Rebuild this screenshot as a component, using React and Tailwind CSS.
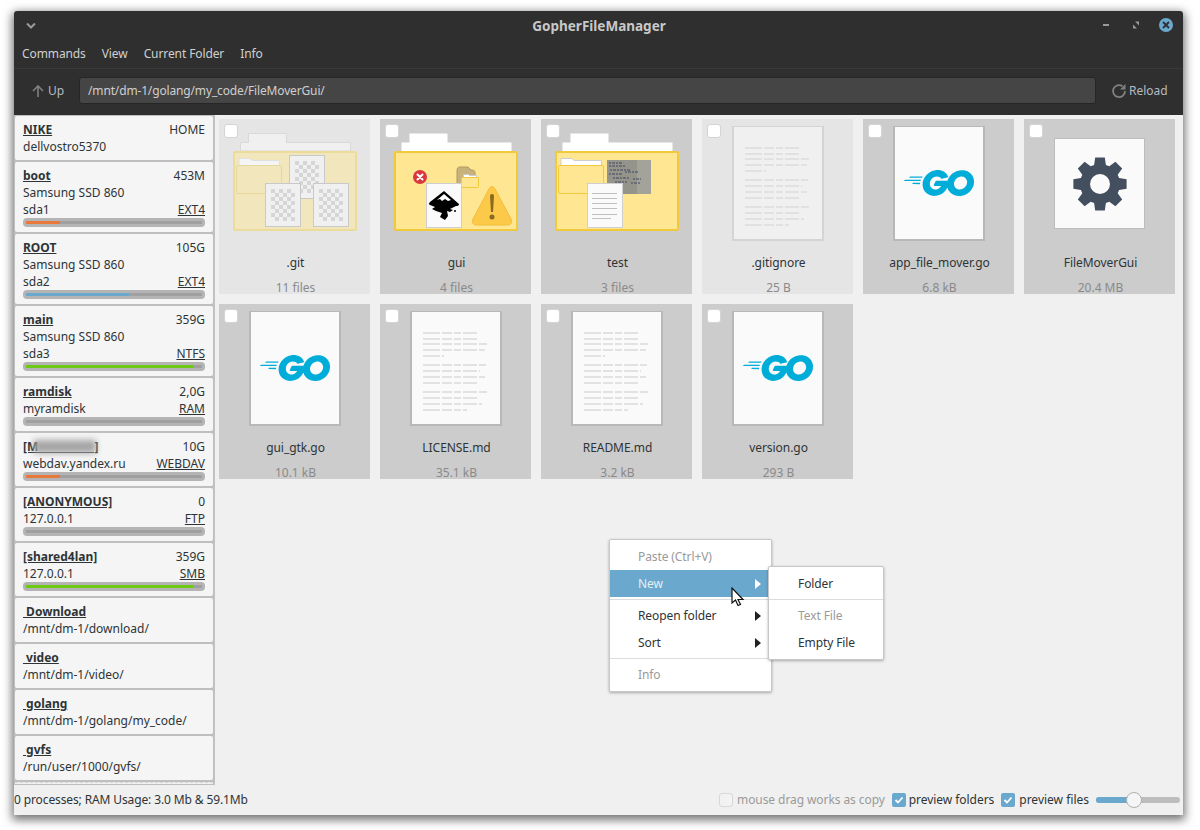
import { SiGo } from "react-icons/si";

const font = "font-['Noto_Sans',sans-serif]";

const drives = [
  { name: "boot", size: "453M", model: "Samsung SSD 860", dev: "sda1", fs: "EXT4", pct: 19.5, bar: "bg-[#e9793a]" },
  { name: "ROOT", size: "105G", model: "Samsung SSD 860", dev: "sda2", fs: "EXT4", pct: 58.5, bar: "bg-[#6aa9cd]" },
  { name: "main", size: "359G", model: "Samsung SSD 860", dev: "sda3", fs: "NTFS", pct: 95, bar: "bg-[#6ec816]" },
];

const mounts = [
  { name: "ramdisk", size: "2,0G", host: "myramdisk", fs: "RAM", pct: 0, bar: "bg-[#a0a0a0]" },
  { name: "[M                  ]", size: "10G", host: "webdav.yandex.ru", fs: "WEBDAV", pct: 19.5, bar: "bg-[#e9793a]", blur: true },
  { name: "[ANONYMOUS]", size: "0", host: "127.0.0.1", fs: "FTP", pct: 0, bar: "bg-[#a0a0a0]" },
  { name: "[shared4lan]", size: "359G", host: "127.0.0.1", fs: "SMB", pct: 95, bar: "bg-[#6ec816]" },
];

const places = [
  { name: "Download", path: "/mnt/dm-1/download/" },
  { name: "video", path: "/mnt/dm-1/video/" },
  { name: "golang", path: "/mnt/dm-1/golang/my_code/" },
  { name: "gvfs", path: "/run/user/1000/gvfs/" },
];

const files = [
  { name: ".git", info: "11 files", hidden: true, thumb: "gitfolder" },
  { name: "gui", info: "4 files", thumb: "guifolder" },
  { name: "test", info: "3 files", thumb: "testfolder" },
  { name: ".gitignore", info: "25 B", hidden: true, thumb: "doc" },
  { name: "app_file_mover.go", info: "6.8 kB", thumb: "go" },
  { name: "FileMoverGui", info: "20.4 MB", thumb: "bin" },
  { name: "gui_gtk.go", info: "10.1 kB", thumb: "go" },
  { name: "LICENSE.md", info: "35.1 kB", thumb: "doc" },
  { name: "README.md", info: "3.2 kB", thumb: "doc" },
  { name: "version.go", info: "293 B", thumb: "go" },
];

// y offset and length of the text lines on the document thumbnail
const docLines = [
  [21, 55], [27, 54], [32, 64], [38, 62], [44, 21],
  [53, 63], [59, 57], [65, 62], [71, 54],
  [80, 64], [86, 54], [92, 59], [98, 44],
];

function gearPath(cx, cy) {
  let d = "";
  for (let i = 0; i < 8; i++) {
    const a = (i * Math.PI) / 4 - Math.PI / 2;
    const pts = [
      [20, -0.3],
      [27, -0.18],
      [27, 0.18],
      [20, 0.3],
    ];
    pts.forEach(([r, o], j) => {
      const x = cx + r * Math.cos(a + o);
      const y = cy + r * Math.sin(a + o);
      d += (i === 0 && j === 0 ? "M" : "L") + x.toFixed(1) + " " + y.toFixed(1);
    });
  }
  return d + "Z";
}

function Checker({ x, y, fill = "#d6d6d6" }) {
  const cells = [];
  for (let r = 0; r < 8; r++) {
    for (let c = 0; c < 6; c++) {
      if ((r + c) % 2 === 0) cells.push(<rect key={r + "-" + c} x={x + c * 4} y={y + r * 4} width="4" height="4" fill={fill} />);
    }
  }
  return <g>{cells}</g>;
}

function SheetSmall({ x, y, border = "#c9c9c9", bg = "#f0f0f0" }) {
  return (
    <g>
      <rect x={x + 0.5} y={y + 0.5} width="35" height="43" fill={bg} stroke={border} />
      <Checker x={x + 6} y={y + 6} />
    </g>
  );
}

function FolderBase({ hidden, children }) {
  const back = hidden ? "#f0f0f0" : "#ffffff";
  const edge = hidden ? "#d9d9d9" : "transparent";
  const front = hidden ? "#f1e6bc" : "#ffe692";
  const frontEdge = hidden ? "#ecdc9c" : "#f0c93c";
  return (
    <svg width="151" height="125" viewBox="0 0 151 125" className="block">
      <path d="M21.500 32V23.500H29.500V14.500H67.500V23.500H131.500V32Z" fill={back} stroke={edge} />
      <rect x="15" y="33" width="122" height="78" fill={front} stroke={frontEdge} strokeWidth="2" rx="1" />
      {children}
    </svg>
  );
}

function SmallFolder({ x, y, hidden }) {
  const fill = hidden ? "#f1e6bc" : "#ffe692";
  const edge = hidden ? "#e6d79c" : "#f0c93c";
  return (
    <g transform={`translate(${x} ${y})`}>
      <path d="M3 8V0.500H14L16 2.500H43.500V8Z" fill={hidden ? "#f5f5f5" : "#ffffff"} stroke={hidden ? "#e0e0e0" : "#cfcfcf"} />
      <rect x="0.5" y="7.5" width="45" height="28" rx="1.5" fill={fill} stroke={edge} />
    </g>
  );
}

function Thumb({ type, hidden }) {
  if (type === "gitfolder") {
    return (
      <FolderBase hidden>
        <SmallFolder x={17} y={39} hidden />
        <SheetSmall x={70} y={36} />
        <SheetSmall x={46} y={64} />
        <SheetSmall x={94} y={64} />
      </FolderBase>
    );
  }
  if (type === "guifolder") {
    return (
      <FolderBase>
        <circle cx="40" cy="58" r="7" fill="#d9363e" />
        <path d="M37.500 55.500l5 5m0-5l-5 5" stroke="#fff" strokeWidth="2" strokeLinecap="round" />
        <path d="M77 52c0-3 1-4 3-4h8l3 3h1c2 0 3 1 3 3v14H77Z" fill="#c6b27a" stroke="#b09a62" />
        <path d="M83.500 58.500v-3h5l1 1h7v2Z" fill="#fff" stroke="#ccc" />
        <rect x="81.500" y="58.500" width="17" height="10" rx="1" fill="#ffe692" stroke="#f0c93c" />
        <rect x="46.500" y="64.500" width="35" height="44" fill="#fafafa" stroke="#cfcfcf" />
        <path d="M64 72L79 85Q79 87 76 87L70 90L73 91L70 93L67 92L68 97L65 101L60 98L62 94L56 92L52 90L55 88L50 86Q48 85 50 83Z" fill="#000" />
        <path d="M64 75L57 81L60 80L62 82L65 80L68 82L71 81Z" fill="#fff" />
        <circle cx="75" cy="92" r="1" fill="#000" />
        <path d="M109.500 69a3 3 0 0 1 5 0L131 100c1.500 3 0 6-3 6H96c-3 0-4.500-3-3-6Z" fill="#fcc948" stroke="#f3bd3a" />
        <path d="M110 77a2 2 0 0 1 4 0l-1 16h-2Z" fill="#8a6a22" />
        <circle cx="112" cy="98" r="2.500" fill="#8a6a22" />
      </FolderBase>
    );
  }
  if (type === "testfolder") {
    return (
      <FolderBase>
        <SmallFolder x={17} y={39} />
        <rect x="66" y="41" width="44" height="34" fill="#94948b" />
        <rect x="96" y="41" width="14" height="34" fill="#a3a399" />
        <path d="M68 44h13M68 47h16M69 51h20M68 55h14M72 59h16M74 63h12M68 67h9M84 53h14M92 60h8M90 64h10" stroke="#3f4760" strokeWidth="1" strokeDasharray="2 1 3 1" />
        <rect x="46.500" y="64.500" width="35" height="44" fill="#fafafa" stroke="#cfcfcf" />
        <path d="M51 74.500h25M51 79.500h25M51 84.500h25M51 89.500h25M51 95.500h25M51 99.500h19" stroke="#c0c0c0" />
      </FolderBase>
    );
  }
  const page = hidden ? "bg-[#f0f0f0] border-[#d4d4d4]" : "bg-[#fafafa] border-[#b8b8b8]";
  if (type === "bin") {
    return (
      <div className="flex h-[125px] items-start justify-center pt-[19px]">
        <div className="flex h-[91px] w-[91px] items-center justify-center border border-[#bcbcbc] bg-[#fafafa]">
          <svg width="60" height="60" viewBox="0 0 60 60">
            <path d={gearPath(30, 30)} fill="#434f5f" />
            <circle cx="30" cy="30" r="10" fill="#fafafa" />
          </svg>
        </div>
      </div>
    );
  }
  return (
    <div className="flex h-[125px] items-start justify-center pt-[7px]">
      <div className={"relative flex h-[115px] w-[92px] items-center justify-center border border-b-2 border-x-2 " + page}>
        {type === "go" && <SiGo size={70} color="#00add8" />}
        {type === "doc" && (
          <svg width="88" height="112" viewBox="0 0 88 112" className="absolute left-0 top-0">
            {docLines.map((l) => (
              <path
                key={l[0]}
                d={`M11 ${l[0]}h${l[1]}`}
                stroke={hidden ? "#dcdcdc" : "#dadada"}
                strokeWidth="1.500"
                strokeDasharray="17 2 10 2 7 2 14 2"
              />
            ))}
          </svg>
        )}
      </div>
    </div>
  );
}

function Tile({ file }) {
  return (
    <div className={"relative h-[175px] w-[151px] " + (file.hidden ? "bg-[#e5e5e5]" : "bg-[#cccccc]")}>
      <div className="absolute left-[5px] top-[5px] z-10 h-[14px] w-[14px] rounded-[3px] border border-[#d4d4d4] bg-white" />
      <div className="h-[125px] overflow-hidden">
        <Thumb type={file.thumb} hidden={file.hidden} />
      </div>
      <div className="mt-[11px] pl-[2px] text-center text-[12px] leading-[16px] tracking-[-0.05px] text-[#2e3436]">{file.name}</div>
      <div className="mt-[11px] pl-[2px] text-center text-[12px] leading-[12px] text-[#8a8a8a]">{file.info}</div>
    </div>
  );
}

function Bar({ pct, color }) {
  return (
    <div className="flex h-[9px] items-center rounded-[4px] bg-[#b4b4b4] px-[3px]">
      <div className="h-[3px] w-full bg-[#a0a0a0]">
        <div className={"h-full " + color} style={{ width: pct + "%" }} />
      </div>
    </div>
  );
}

function Card({ className = "", children }) {
  return <div className={"rounded-[2px] bg-[#f5f5f5] px-[8px] pt-[5px] text-[12px] leading-[17px] text-[#2e3436] " + className}>{children}</div>;
}

function Row({ left, right }) {
  return (
    <div className="flex justify-between whitespace-nowrap">
      {left}
      {right}
    </div>
  );
}

function Sidebar() {
  return (
    <div className="flex h-full w-[201px] shrink-0 flex-col gap-[2px] overflow-hidden border-r border-[#c2c2c2] bg-[#bfbfbf] px-[1px] pt-[1px]">
      <Card className="h-[44px]">
        <Row left={<b className="underline">NIKE</b>} right={<span>HOME</span>} />
        <div>dellvostro5370</div>
      </Card>
      {drives.map((d) => (
        <Card key={d.name} className="h-[70px]">
          <Row left={<b className="underline">{d.name}</b>} right={<span>{d.size}</span>} />
          <div>{d.model}</div>
          <Row left={<span>{d.dev}</span>} right={<span className="underline">{d.fs}</span>} />
          <Bar pct={d.pct} color={d.bar} />
        </Card>
      ))}
      {mounts.map((m) => (
        <Card key={m.host + m.name} className="h-[53px]">
          <div className="relative">
            <Row left={<b className="underline whitespace-pre">{m.name}</b>} right={<span>{m.size}</span>} />
            {m.blur && <div className="absolute left-[11px] top-[2px] h-[13px] w-[62px] bg-[#a4a4a4] blur-[3px]" />}
          </div>
          <Row left={<span>{m.host}</span>} right={<span className="underline">{m.fs}</span>} />
          <Bar pct={m.pct} color={m.bar} />
        </Card>
      ))}
      {places.map((p) => (
        <Card key={p.name} className="h-[44px]">
          <b className="underline whitespace-pre">{" " + p.name}</b>
          <div>{p.path}</div>
        </Card>
      ))}
      <div className="h-[2px] border-t border-dashed border-[#d8d8d8] bg-[#f0f0f0]" />
    </div>
  );
}

function MenuRow({ label, disabled, active, arrow, sub }) {
  let color = "text-[#2e3436]";
  if (disabled) color = "text-[#9a9a9a]";
  if (active) color = "text-[#e6eef4]";
  return (
    <div className={"relative h-[27px] text-[12px] leading-[27px] tracking-[-0.1px] " + (sub ? "pl-[29px] " : "pl-[28px] ") + color + (active ? " bg-[#6aa9cd]" : "")}>
      {label}
      {arrow && (
        <svg width="6" height="10" viewBox="0 0 6 10" className="absolute right-[10px] top-[9px]">
          <path d="M0 0L6 5L0 10Z" fill={active ? "#ffffff" : "#222222"} />
        </svg>
      )}
    </div>
  );
}

function Sep() {
  return <div className="my-[2px] h-[1px] bg-[#dcdcdc]" />;
}

function ContextMenu() {
  return (
    <div className="absolute left-[595px] top-[528px] h-[153px] w-[163px] rounded-[2px] border border-[#c8c8c8] bg-white pt-[3px] shadow-[0_1px_3px_rgba(0,0,0,0.3)]">
      <MenuRow label="Paste (Ctrl+V)" disabled />
      <MenuRow label="New" active arrow />
      <Sep />
      <MenuRow label="Reopen folder" arrow />
      <MenuRow label="Sort" arrow />
      <Sep />
      <MenuRow label="Info" disabled />
      <div className="absolute left-[158px] top-[26px] z-20 h-[94px] w-[116px] rounded-[2px] border border-[#c8c8c8] bg-white pt-[3px] shadow-[0_1px_3px_rgba(0,0,0,0.3)]">
        <MenuRow label="Folder" sub />
        <Sep />
        <MenuRow label="Text File" disabled sub />
        <MenuRow label="Empty File" sub />
      </div>
      <svg width="14" height="20" viewBox="0 0 14 20" className="absolute left-[121px] top-[47px] z-30">
        <path d="M1 1V16L4.500 13L7 18.500L9.500 17.500L7 12.500H12Z" fill="#ffffff" stroke="#111111" strokeWidth="1.200" />
      </svg>
    </div>
  );
}

function Check({ checked, disabled }) {
  if (disabled) return <span className="block h-[14px] w-[14px] rounded-[3px] border border-[#d8d8d8] bg-[#f2f2f2]" />;
  return (
    <span className="flex h-[14px] w-[14px] items-center justify-center rounded-[2px] bg-[#6aa9cd]">
      {checked && (
        <svg width="10" height="8" viewBox="0 0 10 8">
          <path d="M1.500 4L4 6.500L8.500 1.500" fill="none" stroke="#fff" strokeWidth="1.800" />
        </svg>
      )}
    </span>
  );
}

export default function App() {
  return (
    <div className={"h-[830px] w-[1200px] bg-white pl-[14px] pt-[11px] " + font}>
      <div className="relative flex h-[804px] w-[1169px] flex-col rounded-t-[3px] bg-[#f0f0f0] shadow-[0_3px_10px_2px_rgba(0,0,0,0.55)]">
        <div className="flex h-[30px] items-center rounded-t-[3px] bg-[#2f2f2f] pl-[11px] pr-[10px]">
          <div className="flex-1">
            <svg width="12" height="8" viewBox="0 0 12 8" className="block">
              <path d="M2 1.500L6 5.500L10 1.500" fill="none" stroke="#9a9a9a" strokeWidth="2" />
            </svg>
          </div>
          <div className="text-[13.5px] font-bold text-[#c8c8c8]">GopherFileManager</div>
          <div className="flex flex-1 items-center justify-end gap-[16px]">
            <svg width="14" height="14" viewBox="0 0 14 14">
              <rect x="4" y="5" width="6" height="2" fill="#9a9a9a" />
            </svg>
            <svg width="14" height="14" viewBox="0 0 14 14">
              <path d="M4 5.500V9.500H8ZM10 6.500V2.500H6Z" fill="#9a9a9a" />
            </svg>
            <span className="mb-[2px] flex h-[14px] w-[14px] items-center justify-center rounded-full bg-[#6aa9cd]">
              <svg width="8" height="8" viewBox="0 0 8 8">
                <path d="M1 1L7 7M7 1L1 7" stroke="#2f2f2f" strokeWidth="1.800" />
              </svg>
            </span>
          </div>
        </div>
        <div className="flex h-[28px] items-center gap-[16px] border-b border-[#3a3a3a] bg-[#2f2f2f] pb-[1px] pl-[8px] text-[12px] tracking-[-0.1px] text-[#d0d0d0]">
          <span>Commands</span>
          <span>View</span>
          <span>Current Folder</span>
          <span>Info</span>
        </div>
        <div className="flex h-[46px] items-center bg-[#2f2f2f] pb-[3px] text-[12px] text-[#b4bcc2]">
          <div className="flex w-[65px] items-center pl-[17px]">
            <svg width="14" height="14" viewBox="0 0 14 14" className="mr-[3px]">
              <path d="M7 13V2M2 7L7 2L12 7" fill="none" stroke="#808080" strokeWidth="1.600" />
            </svg>
            Up
          </div>
          <div className="flex h-[27px] w-[1017px] items-center rounded-[3px] border border-[#262626] bg-[#454545] pl-[8px] tracking-[-0.15px] text-[#cfcfcf]">/mnt/dm-1/golang/my_code/FileMoverGui/</div>
          <div className="flex items-center pl-[15px]">
            <svg width="16" height="16" viewBox="0 0 16 16" className="mr-[2px]">
              <path d="M14 8A6 6 0 1 1 11.500 3.200" fill="none" stroke="#808080" strokeWidth="1.800" />
              <path d="M14.500 1V6.500H9Z" fill="#808080" />
            </svg>
            Reload
          </div>
        </div>
        <div className="flex h-[670px] bg-[#f0f0f0]">
          <Sidebar />
          <div className="flex flex-wrap content-start gap-[10px] pl-[4px] pt-[4px]">
            {files.map((f) => (
              <Tile key={f.name} file={f} />
            ))}
          </div>
        </div>
        <div className="flex h-[30px] flex-1 items-center justify-between pr-[3px] text-[12px] text-[#2e3436]">
          <span className="tracking-[-0.12px]">0 processes; RAM Usage: 3.0 Mb &amp; 59.1Mb</span>
          <div className="flex items-center">
            <Check disabled />
            <span className="ml-[4px] tracking-[-0.08px] text-[#9a9a9a]">mouse drag works as copy</span>
            <span className="ml-[7px]"><Check checked /></span>
            <span className="ml-[3px] tracking-[-0.05px]">preview folders</span>
            <span className="ml-[7px]"><Check checked /></span>
            <span className="ml-[4px]">preview files</span>
            <div className="relative ml-[7px] flex h-[6px] w-[84px] overflow-visible rounded-full bg-[#bdbdbd]">
              <div className="h-full w-[38px] rounded-l-full bg-[#6aa9cd]" />
              <div className="absolute left-[30px] top-[-5px] h-[16px] w-[16px] rounded-full border border-[#b0b0b0] bg-[#f5f5f5]" />
            </div>
          </div>
        </div>
        <ContextMenu />
      </div>
    </div>
  );
}
